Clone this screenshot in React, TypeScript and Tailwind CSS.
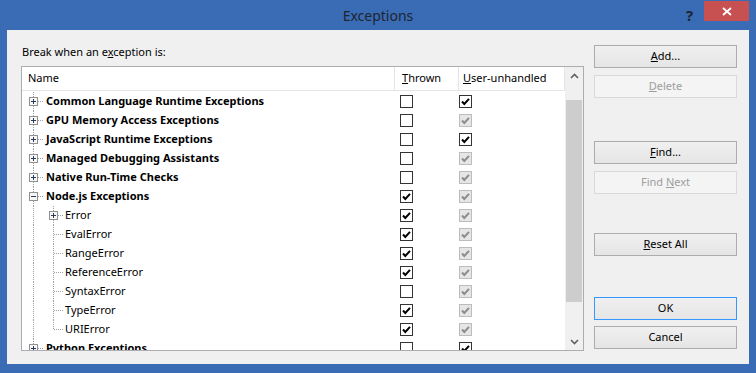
import React from "react";

type Row = {
  label: string;
  level: 0 | 1;
  expander?: "plus" | "minus";
  thrown: boolean;
  user: boolean;
  userDisabled: boolean;
  lastChild?: boolean;
};

const rows: Row[] = [
  { label: "Common Language Runtime Exceptions", level: 0, expander: "plus", thrown: false, user: true, userDisabled: false },
  { label: "GPU Memory Access Exceptions", level: 0, expander: "plus", thrown: false, user: true, userDisabled: true },
  { label: "JavaScript Runtime Exceptions", level: 0, expander: "plus", thrown: false, user: true, userDisabled: false },
  { label: "Managed Debugging Assistants", level: 0, expander: "plus", thrown: false, user: true, userDisabled: true },
  { label: "Native Run-Time Checks", level: 0, expander: "plus", thrown: false, user: true, userDisabled: true },
  { label: "Node.js Exceptions", level: 0, expander: "minus", thrown: true, user: true, userDisabled: true },
  { label: "Error", level: 1, expander: "plus", thrown: true, user: true, userDisabled: true },
  { label: "EvalError", level: 1, thrown: true, user: true, userDisabled: true },
  { label: "RangeError", level: 1, thrown: true, user: true, userDisabled: true },
  { label: "ReferenceError", level: 1, thrown: true, user: true, userDisabled: true },
  { label: "SyntaxError", level: 1, thrown: false, user: true, userDisabled: true },
  { label: "TypeError", level: 1, thrown: true, user: true, userDisabled: true },
  { label: "URIError", level: 1, thrown: true, user: true, userDisabled: true, lastChild: true },
  { label: "Python Exceptions", level: 0, expander: "plus", thrown: false, user: true, userDisabled: false },
];

const DOT = "#a0a0a0";

function Expander({ x, kind }: { x: number; kind: "plus" | "minus" }) {
  return (
    <g shapeRendering="crispEdges">
      <rect x={x + 0.5} y={5.5} width={8} height={8} fill="#f7f7f7" stroke="#919191" />
      <line x1={x + 2} y1={9.5} x2={x + 7} y2={9.5} stroke="#2b3b5c" />
      {kind === "plus" && <line x1={x + 4.5} y1={7} x2={x + 4.5} y2={12} stroke="#2b3b5c" />}
    </g>
  );
}

function Gutter({ row }: { row: Row }) {
  const w = row.level === 0 ? 24 : 43;
  return (
    <svg width={w} height={19} className="shrink-0">
      <g stroke={DOT} strokeDasharray="1 1" shapeRendering="crispEdges">
        <line x1={11.5} y1={0} x2={11.5} y2={19} />
        {row.level === 0 && <line x1={16} y1={9.5} x2={22} y2={9.5} />}
        {row.level === 1 && (
          <>
            <line x1={31.5} y1={0} x2={31.5} y2={row.lastChild ? 10 : 19} />
            <line x1={32} y1={9.5} x2={41} y2={9.5} />
          </>
        )}
      </g>
      {row.expander && <Expander x={row.level === 0 ? 7 : 27} kind={row.expander} />}
    </svg>
  );
}

function Check({ checked, disabled }: { checked: boolean; disabled?: boolean }) {
  return (
    <svg width={13} height={13} className="shrink-0">
      <rect
        x={0.5}
        y={0.5}
        width={12}
        height={12}
        fill={disabled ? "#e6e6e6" : "#ffffff"}
        stroke={disabled ? "#bcbcbc" : "#333333"}
        shapeRendering="crispEdges"
      />
      {checked && (
        <path
          d="M3 6.5 L5.3 9 L10 3.8"
          fill="none"
          stroke={disabled ? "#8d8d8d" : "#000000"}
          strokeWidth={2}
        />
      )}
    </svg>
  );
}

function Btn({ children, disabled, def, className = "" }: { children: React.ReactNode; disabled?: boolean; def?: boolean; className?: string }) {
  return (
    <div
      className={
        "flex h-[23px] w-[143px] shrink-0 items-center justify-center border text-[11px] " +
        (disabled
          ? "border-[#d9d9d9] bg-[#f4f4f4] text-[#9d9d9d] "
          : def
            ? "border-[#3399ff] bg-gradient-to-b from-[#f0f0f0] to-[#e5e5e5] text-black "
            : "border-[#acacac] bg-gradient-to-b from-[#f0f0f0] to-[#e5e5e5] text-black ") +
        className
      }
    >
      <span>{children}</span>
    </div>
  );
}

function Chevron({ up }: { up?: boolean }) {
  return (
    <svg width={9} height={6}>
      <path
        d={up ? "M1 5 L4.5 1.5 L8 5" : "M1 1 L4.5 4.5 L8 1"}
        fill="none"
        stroke="#606060"
        strokeWidth={1.6}
      />
    </svg>
  );
}

export default function App() {
  return (
    <div
      className="flex h-[373px] w-[756px] flex-col bg-[#3a6bb5]"
      style={{ fontFamily: '"Noto Sans", "Open Sans", sans-serif' }}
    >
      {/* title bar */}
      <div className="relative flex h-[30px] shrink-0 items-center justify-center">
        <span className="text-[14px] text-[#1e2530]">Exceptions</span>
        <span className="absolute left-[686px] top-[4px] text-[15px] font-bold text-[#1c2433]">?</span>
        <div className="absolute left-[704px] top-[1px] flex h-[20px] w-[45px] items-center justify-center bg-[#c75050]">
          <svg width={10} height={9}>
            <path d="M1 1 L9 8 M9 1 L1 8" stroke="#ffffff" strokeWidth={1.8} />
          </svg>
        </div>
      </div>

      {/* client area */}
      <div className="mx-[7px] mb-[9px] flex flex-1 bg-[#f0f0f0] pt-[15px] text-[11px] text-black">
        <div className="ml-[14px] flex flex-col">
          <div className="h-[21px] pl-[1px] leading-[14px]">
            Break when an e<u>x</u>ception is:
          </div>
          <div className="flex h-[285px] w-[563px] border border-[#abadb3] bg-white">
            <div className="flex w-[543px] flex-col">
              <div className="flex h-[24px] shrink-0 border-b border-[#e5e5e5]">
                <div className="flex w-[372px] items-center pl-[6px]">Name</div>
                <div className="flex w-[64px] items-center border-l border-[#e5e5e5] pl-[7px]">
                  <span>
                    <u>T</u>hrown
                  </span>
                </div>
                <div className="flex w-[107px] items-center border-x border-[#e5e5e5] pl-[4px]">
                  <span>
                    <u>U</u>ser-unhandled
                  </span>
                </div>
              </div>
              <div className="flex-1 overflow-hidden pt-[1px]">
                {rows.map((r) => (
                  <div key={r.label} className="flex h-[19px] items-center">
                    <div className="flex w-[372px] items-center">
                      <Gutter row={r} />
                      <span className={r.level === 0 ? "font-bold" : ""}>{r.label}</span>
                    </div>
                    <div className="flex w-[64px] pl-[6px]">
                      <Check checked={r.thrown} />
                    </div>
                    <div className="flex w-[107px] pl-[1px]">
                      <Check checked={r.user} disabled={r.userDisabled} />
                    </div>
                  </div>
                ))}
              </div>
            </div>
            <div className="flex w-[18px] flex-col items-center bg-[#f0f0f0]">
              <div className="flex h-[17px] w-full items-center justify-center">
                <Chevron up />
              </div>
              <div className="mt-[16px] h-[202px] w-[16px] bg-[#cdcdcd]" />
              <div className="flex-1" />
              <div className="flex h-[17px] w-full items-center justify-center">
                <Chevron />
              </div>
            </div>
          </div>
        </div>

        <div className="ml-[10px] flex flex-col">
          <Btn>
            <u>A</u>dd...
          </Btn>
          <Btn disabled className="mt-[7px]">
            <u>D</u>elete
          </Btn>
          <Btn className="mt-[43px]">
            <u>F</u>ind...
          </Btn>
          <Btn disabled className="mt-[7px]">
            Find <u>N</u>ext
          </Btn>
          <Btn className="mt-[39px]">
            <u>R</u>eset All
          </Btn>
          <Btn def className="mt-[41px]">
            OK
          </Btn>
          <Btn className="mt-[6px]">Cancel</Btn>
        </div>
      </div>
    </div>
  );
}
